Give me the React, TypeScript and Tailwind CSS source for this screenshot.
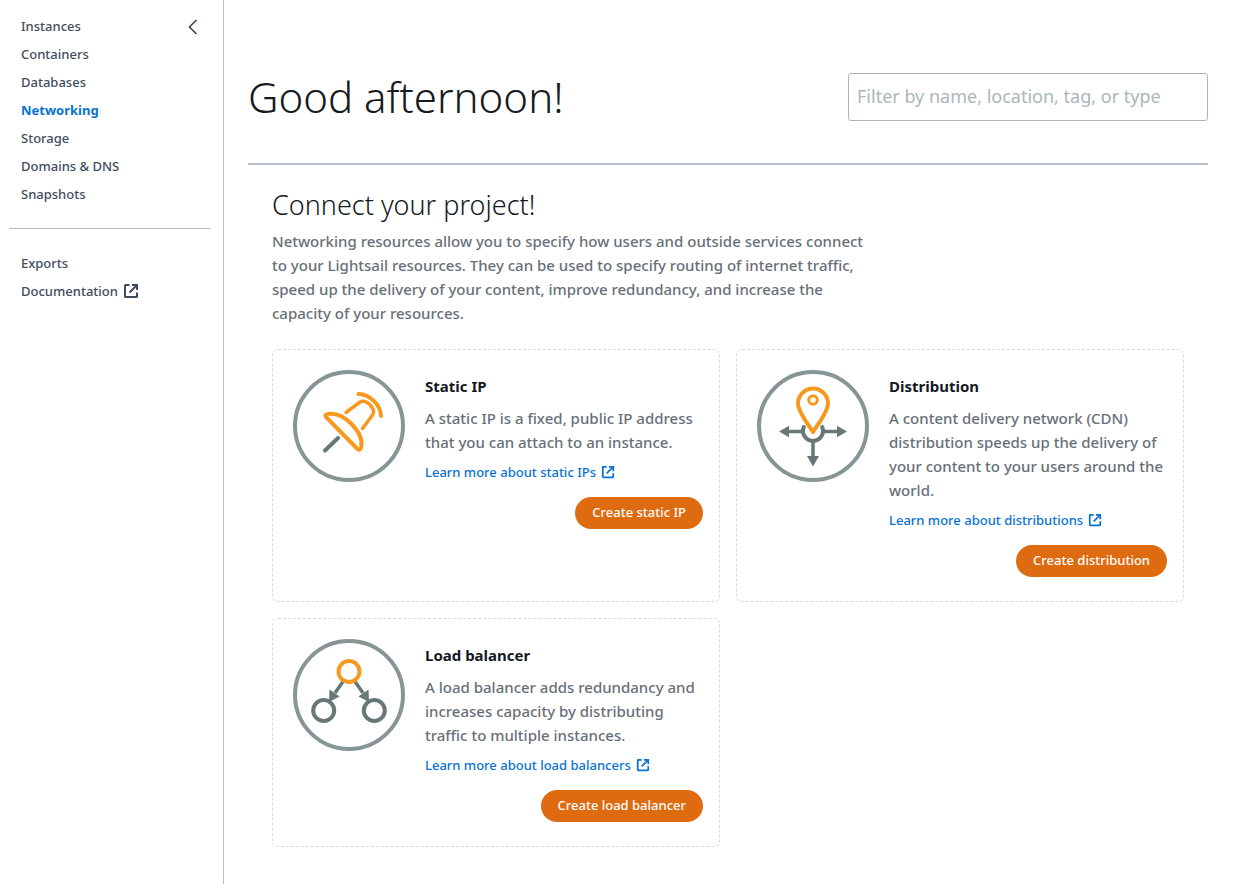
import type { ReactNode } from "react";

const navItems = ["Instances", "Containers", "Databases", "Networking", "Storage", "Domains & DNS", "Snapshots"];

function ExternalIcon({ className }: { className: string }) {
  return (
    <svg viewBox="0 0 16 16" fill="none" stroke="currentColor" strokeWidth="2" className={className} aria-hidden="true">
      <path d="M6.5 2H2.5Q2 2 2 2.5V13.5Q2 14 2.5 14H13.5Q14 14 14 13.5V9.5" />
      <path d="M9 2H14V7M14 2L6.5 9.5" />
    </svg>
  );
}

function Badge({ children }: { children: ReactNode }) {
  return (
    <svg viewBox="0 0 112 112" fill="none" className="size-28 shrink-0" aria-hidden="true">
      <circle cx="56" cy="56" r="54" stroke="#879596" strokeWidth="4" />
      {children}
    </svg>
  );
}

function PinIcon() {
  return (
    <Badge>
      <g strokeLinecap="round" strokeLinejoin="round">
        <path d="M32 80.5L45 68" stroke="#687778" strokeWidth="4" />
        <g stroke="#f7981f">
          <path d="M33.5 47.5C31 45 33 44 37 43.8C43 43.5 51 46.5 58 53.5C66 61.5 69.5 70 68.3 76.5C67.5 80.5 66 80.5 63.5 78Z" strokeWidth="4" />
          <path d="M53 42.5L66.5 32.3Q70 30.2 74 32.5Q79.5 36 80.5 41Q81 43 79.5 45L69.5 58.5" strokeWidth="3.5" />
          <path d="M65.5 24C77 24.5 87.5 34.5 88 46" strokeWidth="4" />
        </g>
      </g>
    </Badge>
  );
}

function DistributionIcon() {
  return (
    <Badge>
      <g stroke="#687778" strokeWidth="3.5">
        <path d="M32 61.5H45M67 61.5H80M56 72V86" />
        <path d="M46.8 57A10 10 0 1 0 65.2 57" strokeWidth="4" strokeLinecap="round" />
      </g>
      <path d="M22 61.5L32 55.7V67.3ZM90 61.5L80 55.7V67.3ZM56 96.5L50 86H62Z" fill="#687778" />
      <path d="M56 62C53 57 41 42 41 33.5A15 15 0 0 1 71 33.5C71 42 59 57 56 62Z" fill="white" stroke="#f7981f" strokeWidth="4" strokeLinejoin="round" />
      <circle cx="56" cy="30" r="4.3" stroke="#f7981f" strokeWidth="3" />
    </Badge>
  );
}

function BalancerIcon() {
  return (
    <Badge>
      <path d="M50 42.5L42 54M62 42.5L70 54" stroke="#687778" strokeWidth="3.5" />
      <path d="M36 63L36.5 50.5L46.5 57.5ZM76 63L75.5 50.5L65.5 57.5Z" fill="#687778" />
      <g strokeWidth="4">
        <circle cx="56" cy="32.5" r="10.5" stroke="#f7981f" />
        <circle cx="30.7" cy="71.5" r="10.5" stroke="#687778" />
        <circle cx="81.3" cy="71.5" r="10.5" stroke="#687778" />
      </g>
    </Badge>
  );
}

const cards = [
  {
    title: "Static IP",
    text: "A static IP is a fixed, public IP address that you can attach to an instance.",
    link: "Learn more about static IPs",
    action: "Create static IP",
    icon: <PinIcon />,
  },
  {
    title: "Distribution",
    text: "A content delivery network (CDN) distribution speeds up the delivery of your content to your users around the world.",
    link: "Learn more about distributions",
    action: "Create distribution",
    icon: <DistributionIcon />,
  },
  {
    title: "Load balancer",
    text: "A load balancer adds redundancy and increases capacity by distributing traffic to multiple instances.",
    link: "Learn more about load balancers",
    action: "Create load balancer",
    icon: <BalancerIcon />,
  },
];

function Sidebar() {
  return (
    <aside className="w-56 shrink-0 border-r border-[#b6bec9] pl-[9px] pr-3 pt-3 text-[13px] font-medium leading-7 text-[#414d5c]">
      <div className="flex items-start justify-between pl-3 pr-2">
        <nav aria-label="Resources">
          <ul>
            {navItems.map((item) => (
              <li key={item}>
                <a href="#" className={item === "Networking" ? "font-bold text-[#0972d3]" : ""}>
                  {item}
                </a>
              </li>
            ))}
          </ul>
        </nav>
        <button type="button" aria-label="Collapse navigation" className="flex h-[30px] w-5 items-center justify-center">
          <svg viewBox="0 0 10 16" fill="none" stroke="currentColor" strokeWidth="1.7" className="h-4 w-2.5" aria-hidden="true">
            <path d="M8.5 1L1.5 8L8.5 15" />
          </svg>
        </button>
      </div>
      <hr className="my-5 border-[#b6bec9]" />
      <ul className="pl-3">
        <li>
          <a href="#">Exports</a>
        </li>
        <li>
          <a href="#" className="inline-flex items-center gap-[5px]">
            Documentation
            <ExternalIcon className="size-4" />
          </a>
        </li>
      </ul>
    </aside>
  );
}

export default function App() {
  return (
    <div className="flex min-h-screen bg-white font-['Noto_Sans',sans-serif]">
      <Sidebar />
      <main className="min-w-0 grow pl-6 pr-[38px] pt-[73px]">
        <header className="flex items-center justify-between gap-6 border-b-2 border-[#b6bec9] pb-[42px]">
          <h1 className="text-[42px] font-light leading-12 text-[#16191f]">Good afternoon!</h1>
          <input
            type="text"
            aria-label="Filter resources"
            placeholder="Filter by name, location, tag, or type"
            className="h-12 w-[360px] rounded-[3px] border border-[#aab7b8] px-2 pb-0.5 text-[18px] text-[#16191f] placeholder:text-[#aab7b8]"
          />
        </header>
        <section className="px-6 pb-9 pt-6">
          <h2 className="text-[27px] font-light leading-8 text-[#16191f]">Connect your project!</h2>
          <p className="mt-2 max-w-[602px] text-[15px] font-medium leading-6 text-[#687078]">
            Networking resources allow you to specify how users and outside services connect to your Lightsail
            resources. They can be used to specify routing of internet traffic, speed up the delivery of your content,
            improve redundancy, and increase the capacity of your resources.
          </p>
          <div className="mt-6 grid grid-cols-2 gap-4">
            {cards.map((card) => (
              <article key={card.title} className="flex gap-5 rounded-md border border-dashed border-[#d5dbdb] pb-6 pl-5 pr-4 pt-5">
                {card.icon}
                <div className="flex min-w-0 grow flex-col items-start pt-1">
                  <h3 className="text-[15px] font-bold leading-6 text-[#16191f]">{card.title}</h3>
                  <p className="mt-2 text-[15px] font-medium leading-6 text-[#687078]">{card.text}</p>
                  <a href="#" className="mt-2 flex items-center gap-[5px] text-[13px] font-medium leading-5 text-[#0972d3]">
                    {card.link}
                    <ExternalIcon className="size-3.5" />
                  </a>
                  <button
                    type="button"
                    className="mt-[15px] h-8 self-end rounded-full bg-[#df6b11] px-[17px] text-[13px] font-medium text-white"
                  >
                    {card.action}
                  </button>
                </div>
              </article>
            ))}
          </div>
        </section>
      </main>
    </div>
  );
}
